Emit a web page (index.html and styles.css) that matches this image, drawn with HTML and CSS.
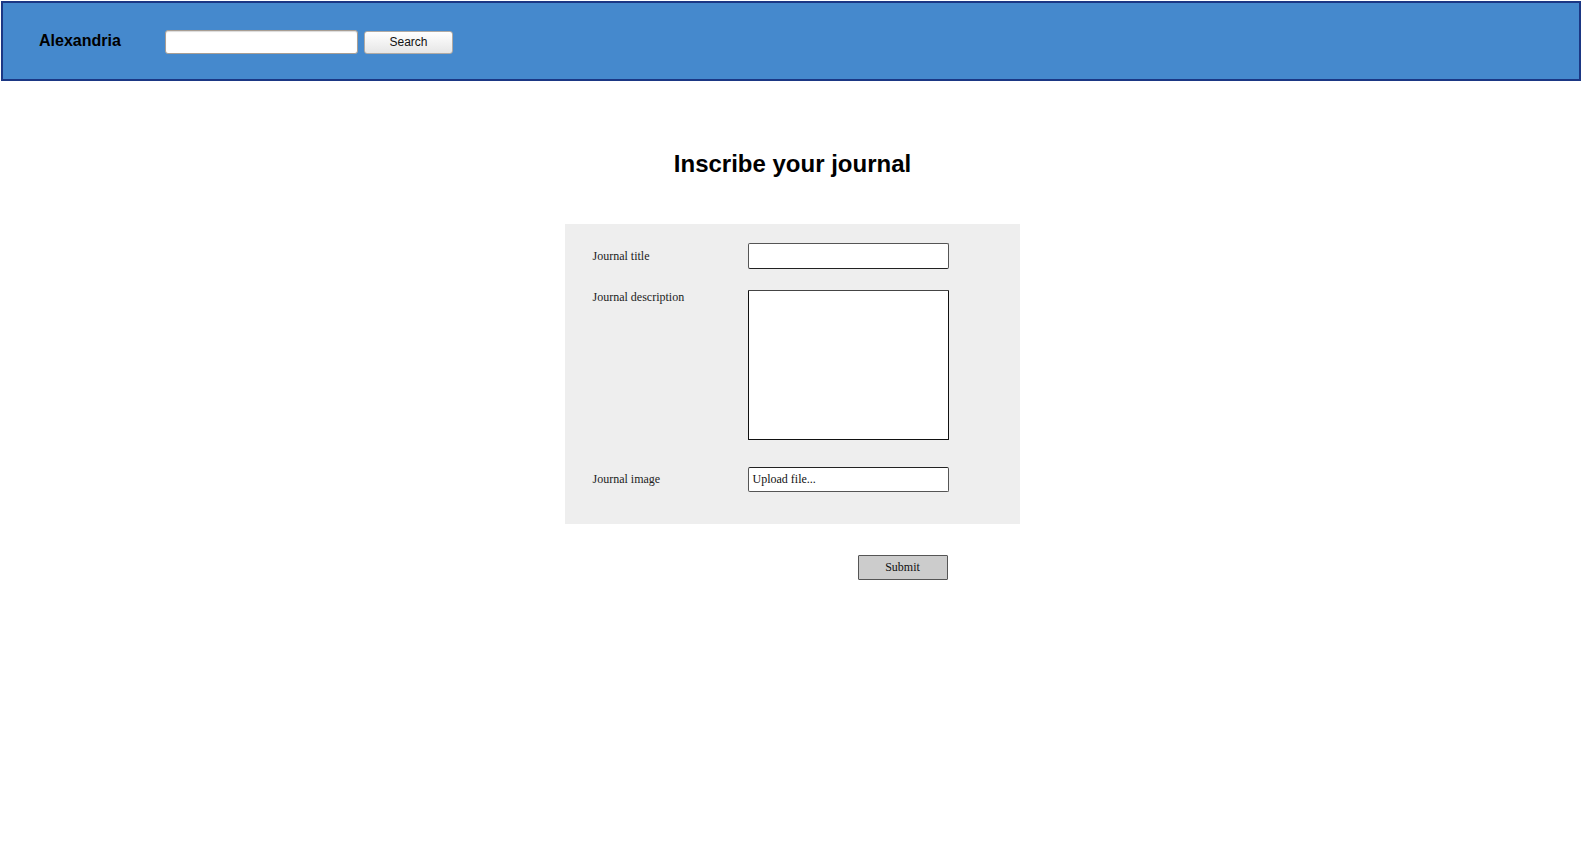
FILE: index.html
```html
<!DOCTYPE html>
<html>
<head>
<meta charset="utf-8">
<link rel="stylesheet" href="styles.css">
</head>
<body>
<header class="topbar">
  <div class="brand">Alexandria</div>
  <input class="search-input" type="text">
  <button class="search-btn">Search</button>
</header>
<main class="main">
  <h1 class="title">Inscribe your journal</h1>
  <form class="panel">
    <div class="row row-title">
      <label class="label">Journal title</label>
      <div class="field field-title"></div>
    </div>
    <div class="row row-desc">
      <label class="label label-top">Journal description</label>
      <div class="field field-desc"></div>
    </div>
    <div class="row row-image">
      <label class="label">Journal image</label>
      <div class="field field-upload">Upload file...</div>
    </div>
  </form>
  <div class="actions">
    <div class="submit">Submit</div>
  </div>
</main>
</body>
</html>
```

FILE: styles.css
```css
html, body {
  margin: 0;
  padding: 0;
  background: #ffffff;
}

.topbar {
  box-sizing: border-box;
  margin: 1px 1px 0 1px;
  height: 80px;
  background: #4589cd;
  border: 2px solid #1b3784;
  display: flex;
  align-items: center;
  padding-left: 36px;
  padding-top: 2px;
}

.brand {
  font-family: "Liberation Sans", Arial, sans-serif;
  font-weight: bold;
  font-size: 16px;
  color: #000;
  width: 82px;
  margin-right: 44px;
  margin-top: -2px;
}

.search-input {
  box-sizing: border-box;
  width: 193px;
  height: 24px;
  margin: 0;
  padding: 0;
  background: #fff;
  border: 1px solid #a89e94;
  border-radius: 3px;
  box-shadow: inset 0 1px 1px rgba(0,0,0,0.15);
}

.search-btn {
  box-sizing: border-box;
  width: 89px;
  height: 23px;
  margin: 0 0 0 6px;
  padding: 0;
  border: 1px solid #b0aaa4;
  border-radius: 3px;
  background: linear-gradient(#ffffff, #e6e6e6);
  font-family: "Liberation Sans", Arial, sans-serif;
  font-size: 12px;
  color: #111;
}

.main {
  display: flex;
  flex-direction: column;
  align-items: center;
}

.title {
  margin: 69px 0 0 0;
  font-family: "Liberation Sans", Arial, sans-serif;
  font-weight: bold;
  font-size: 24px;
  line-height: 28px;
  color: #000;
  padding-left: 3px;
}

.panel {
  box-sizing: border-box;
  width: 455px;
  height: 300px;
  margin: 46px 0 0 2px;
  background: #eeeeee;
  padding: 19px 0 0 28px;
  display: flex;
  flex-direction: column;
}

.row {
  display: flex;
  align-items: center;
}

.row-desc {
  margin-top: 21px;
  align-items: flex-start;
}

.row-image {
  margin-top: 27px;
}

.label {
  width: 155px;
  font-family: "Liberation Serif", "Times New Roman", serif;
  font-size: 12px;
  color: #222;
}

.label-top {
  margin-top: 0;
}

.field {
  box-sizing: border-box;
  width: 201px;
  background: #fff;
}

.field-title {
  height: 26px;
  border: 1.5px solid #555;
  border-bottom-color: #222;
  border-radius: 2px;
}

.field-desc {
  height: 150px;
  border: 1.5px solid #111;
  border-top-color: #444;
  border-radius: 1px;
}

.field-upload {
  height: 25px;
  border: 1.5px solid #555;
  border-top-color: #222;
  border-radius: 2px;
  font-family: "Liberation Serif", "Times New Roman", serif;
  font-size: 12px;
  color: #111;
  line-height: 22px;
  padding-left: 4px;
}

.actions {
  box-sizing: border-box;
  width: 455px;
  margin: 31px 0 0 2px;
  padding-right: 72px;
  display: flex;
  justify-content: flex-end;
}

.submit {
  box-sizing: border-box;
  width: 90px;
  height: 25px;
  background: #cccccc;
  border: 1.5px solid #555;
  border-radius: 1px;
  font-family: "Liberation Serif", "Times New Roman", serif;
  font-size: 12px;
  color: #111;
  display: flex;
  align-items: center;
  justify-content: center;
}
```
